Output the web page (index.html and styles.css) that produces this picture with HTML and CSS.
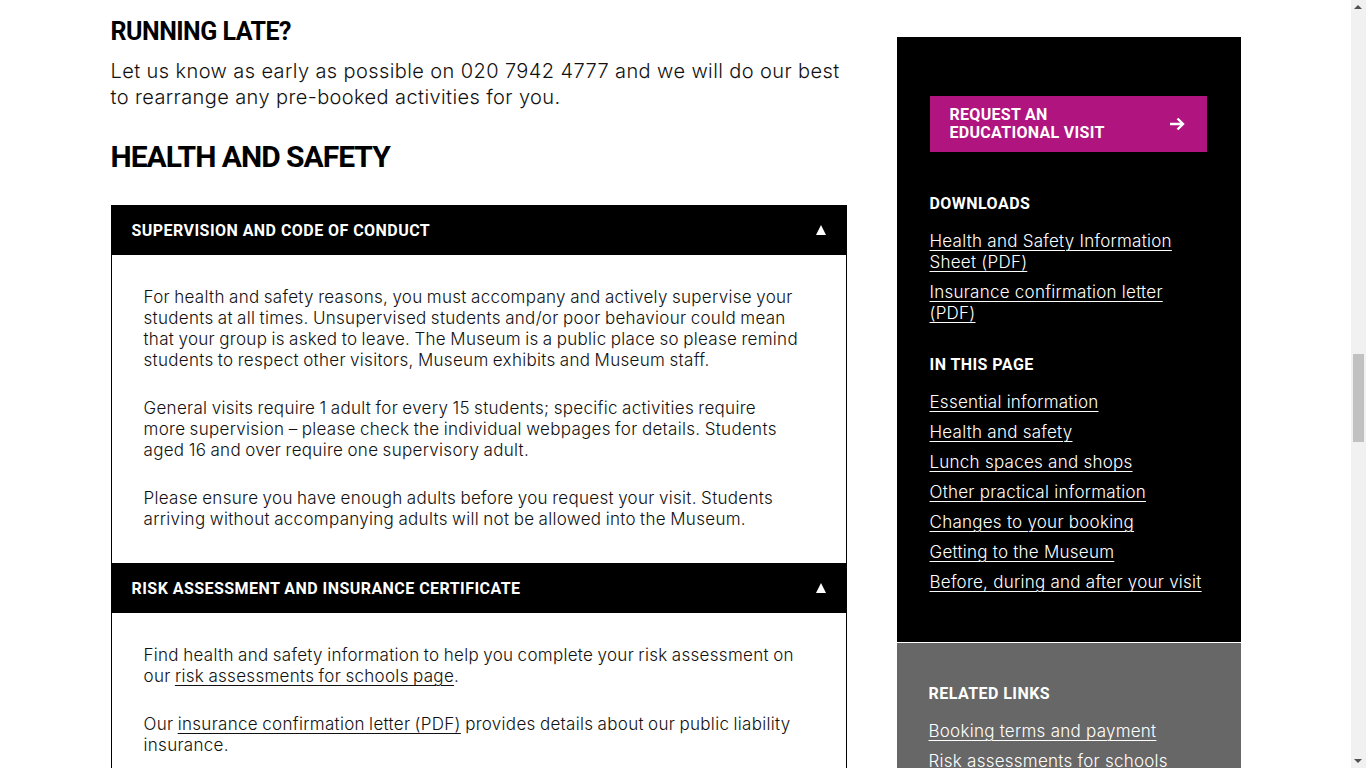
FILE: index.html
```html
<!DOCTYPE html>
<html lang="en">
<head>
<meta charset="utf-8">
<title>Health and safety</title>
<link rel="stylesheet" href="styles.css">
</head>
<body>
<div class="page">
  <main class="main">
    <h2 class="h-sub">RUNNING LATE?</h2>
    <p class="lead">Let us know as early as possible on 020 7942 4777 and we will do our best to rearrange any pre-booked activities for you.</p>
    <h2 class="h-section">HEALTH AND SAFETY</h2>

    <section class="accordion">
      <div class="acc-head">
        <span>SUPERVISION AND CODE OF CONDUCT</span>
        <span class="caret"></span>
      </div>
      <div class="acc-body">
        <p>For health and safety reasons, you must accompany and actively supervise your students at all times. Unsupervised students and/or poor behaviour could mean that your group is asked to leave. The Museum is a public place so please remind students to respect other visitors, Museum exhibits and Museum staff.</p>
        <p>General visits require 1 adult for every 15 students; specific activities require more supervision – please check the individual webpages for details. Students aged 16 and over require one supervisory adult.</p>
        <p>Please ensure you have enough adults before you request your visit. Students arriving without accompanying adults will not be allowed into the Museum.</p>
      </div>
      <div class="acc-head">
        <span>RISK ASSESSMENT AND INSURANCE CERTIFICATE</span>
        <span class="caret"></span>
      </div>
      <div class="acc-body">
        <p>Find health and safety information to help you complete your risk assessment on our <a href="#">risk assessments for schools page</a>.</p>
        <p>Our <a href="#">insurance confirmation letter (PDF)</a> provides details about our public liability insurance.</p>
      </div>
    </section>
  </main>

  <aside class="side">
    <div class="side-dark">
      <a class="cta" href="#">
        <span class="cta-text">REQUEST AN<br>EDUCATIONAL VISIT</span>
        <svg class="cta-arrow" width="16" height="14" viewBox="0 0 16 14" aria-hidden="true"><path d="M1 7h13M8.5 1.5L14 7l-5.5 5.5" fill="none" stroke="#fff" stroke-width="2.4"/></svg>
      </a>
      <h3 class="side-h">DOWNLOADS</h3>
      <ul class="side-links">
        <li><a href="#">Health and Safety Information Sheet (PDF)</a></li>
        <li><a href="#">Insurance confirmation letter (PDF)</a></li>
      </ul>
      <h3 class="side-h">IN THIS PAGE</h3>
      <ul class="side-links">
        <li><a href="#">Essential information</a></li>
        <li><a href="#">Health and safety</a></li>
        <li><a href="#">Lunch spaces and shops</a></li>
        <li><a href="#">Other practical information</a></li>
        <li><a href="#">Changes to your booking</a></li>
        <li><a href="#">Getting to the Museum</a></li>
        <li><a href="#">Before, during and after your visit</a></li>
      </ul>
    </div>
    <div class="side-grey">
      <h3 class="side-h">RELATED LINKS</h3>
      <ul class="side-links">
        <li><a href="#">Booking terms and payment</a></li>
        <li><a href="#">Risk assessments for schools</a></li>
        <li><a href="#">Travel and access</a></li>
      </ul>
    </div>
  </aside>
</div>

<div class="scrollbar" aria-hidden="true">
  <span class="sb-up"></span>
  <span class="sb-thumb"></span>
  <span class="sb-down"></span>
</div>
</body>
</html>
```

FILE: styles.css
```css
html, body {
  margin: 0;
  padding: 0;
  background: #fff;
}
body {
  font-family: "Inter", "Liberation Sans", sans-serif;
  color: #111;
  padding-right: 15px;
}
.page {
  width: 1130px;
  margin: 0 auto;
  display: flex;
  gap: 50px;
  align-items: flex-start;
  padding-bottom: 200px;
}
.main {
  width: 736px;
  flex: none;
}
.h-sub {
  font-family: "Roboto", "Liberation Sans", sans-serif;
  font-weight: 700;
  font-size: 25px;
  line-height: 30px;
  margin: 17px 0 11px;
  letter-spacing: -0.5px;
  color: #000;
}
.lead {
  font-size: 20px;
  line-height: 26px;
  margin: 0;
  font-weight: 300;
  letter-spacing: 0.4px;
}
.h-section {
  font-family: "Roboto", "Liberation Sans", sans-serif;
  font-weight: 700;
  font-size: 30px;
  line-height: 36px;
  margin: 29px 0 30px;
  letter-spacing: -1px;
  color: #000;
}
.accordion {
  border: 1px solid #000;
  border-top: none;
}
.acc-head {
  background: #000;
  color: #fff;
  height: 50px;
  margin: 0 -1px;
  padding: 0 21px;
  display: flex;
  align-items: center;
  justify-content: space-between;
  font-family: "Roboto", "Liberation Sans", sans-serif;
  font-weight: 700;
  font-size: 16px;
  letter-spacing: 0.45px;
}
.caret {
  width: 0;
  height: 0;
  border-left: 5px solid transparent;
  border-right: 5px solid transparent;
  border-bottom: 10px solid #fff;
}
.acc-body {
  padding: 32px 46px 33px 32px;
}
.acc-body p {
  font-size: 17px;
  line-height: 21px;
  margin: 0 0 27px;
  font-weight: 300;
  letter-spacing: 0.3px;
  word-spacing: -0.8px;
}
.acc-body p:last-child {
  margin-bottom: 0;
}
.acc-body a {
  color: #111;
  text-decoration: underline;
  text-underline-offset: 3px;
  text-decoration-thickness: 1px;
}
.side {
  width: 344px;
  flex: none;
  margin-top: 37px;
}
.side-dark {
  background: #000;
  color: #fff;
  padding: 59px 34px 49px 33px;
}
.side-grey {
  background: #676767;
  color: #fff;
  border-top: 1px solid #fff;
  padding: 41px 34px 40px 32px;
}
.cta {
  display: flex;
  align-items: center;
  justify-content: space-between;
  background: #b0147f;
  color: #fff;
  text-decoration: none;
  height: 56px;
  padding: 0 22px 0 20px;
  font-family: "Roboto", "Liberation Sans", sans-serif;
  font-weight: 700;
  font-size: 16px;
  line-height: 18px;
  letter-spacing: 0.3px;
  margin-bottom: 42px;
}
.cta-arrow {
  display: block;
}
.side-h {
  font-family: "Roboto", "Liberation Sans", sans-serif;
  font-weight: 700;
  font-size: 16px;
  line-height: 20px;
  letter-spacing: 0.45px;
  margin: 0 0 17px;
}
.side-links {
  list-style: none;
  margin: 0 0 31px;
  padding: 0;
}
.side-links:last-child {
  margin-bottom: 0;
}
.side-links li {
  font-size: 17px;
  line-height: 21px;
  margin-bottom: 9px;
  font-weight: 300;
  letter-spacing: 0.25px;
}
.side-links li:last-child {
  margin-bottom: 0;
}
.side-links a {
  color: #fff;
  text-decoration: underline;
  text-underline-offset: 3px;
  text-decoration-thickness: 1px;
}

/* drawn browser scrollbar */
.scrollbar {
  position: fixed;
  top: 0;
  right: 0;
  width: 15px;
  height: 100vh;
  background: #f1f1f1;
}
.sb-up, .sb-down {
  position: absolute;
  left: 3px;
  width: 0;
  height: 0;
  border-left: 4px solid transparent;
  border-right: 4px solid transparent;
}
.sb-up {
  top: 5px;
  border-bottom: 4px solid #505050;
}
.sb-down {
  bottom: 5px;
  border-top: 4px solid #505050;
}
.sb-thumb {
  position: absolute;
  left: 2px;
  top: 354px;
  width: 11px;
  height: 88px;
  background: #c1c1c1;
}
```
